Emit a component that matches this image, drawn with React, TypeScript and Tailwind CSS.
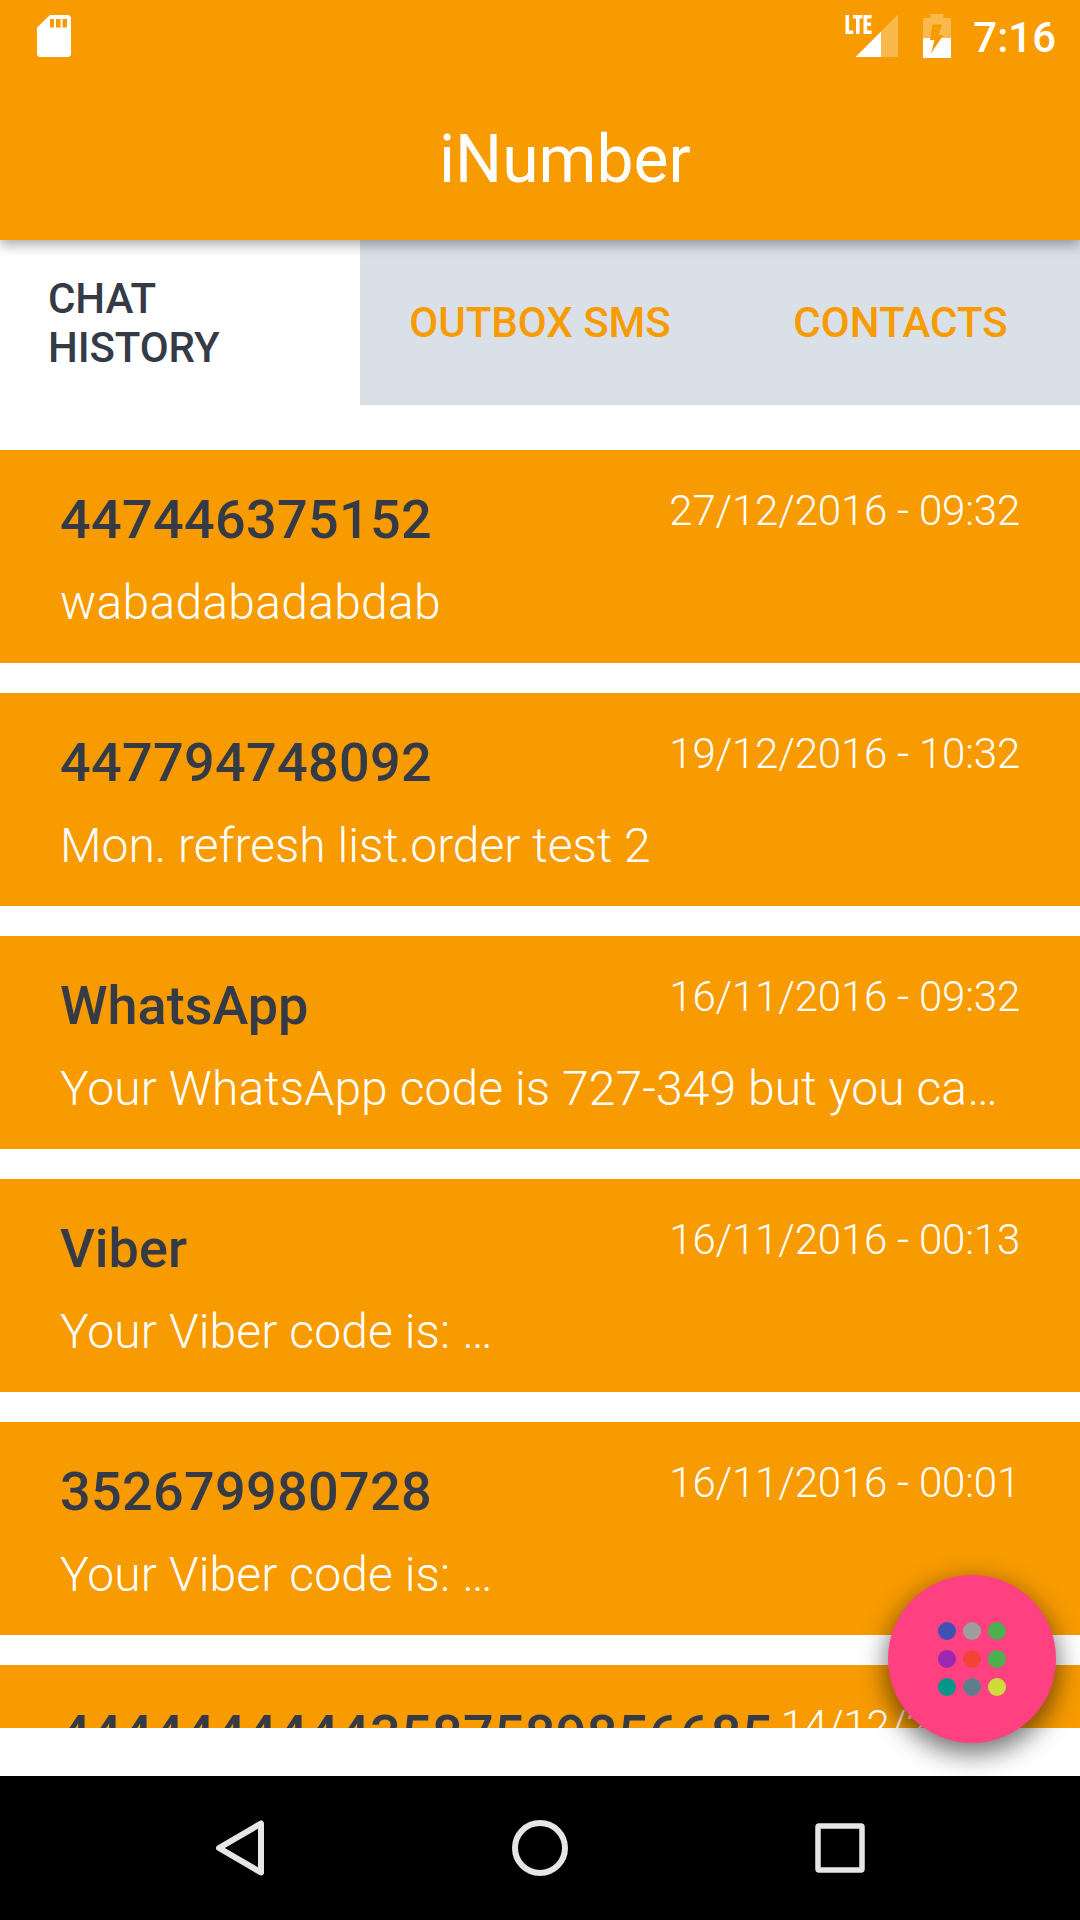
import React from "react";

type Chat = { name: string; date: string; text: string; nameTracking: string; textTracking: string };

const chats: Chat[] = [
  {
    name: "447446375152",
    date: "27/12/2016 - 09:32",
    text: "wabadabadabdab",
    nameTracking: "tracking-[0.3px]",
    textTracking: "tracking-[0.27px]",
  },
  {
    name: "447794748092",
    date: "19/12/2016 - 10:32",
    text: "Mon. refresh list.order test 2",
    nameTracking: "tracking-[0.3px]",
    textTracking: "tracking-normal",
  },
  {
    name: "WhatsApp",
    date: "16/11/2016 - 09:32",
    text: "Your WhatsApp code is 727-349 but you ca…",
    nameTracking: "tracking-normal",
    textTracking: "tracking-[0.1px]",
  },
  {
    name: "Viber",
    date: "16/11/2016 - 00:13",
    text: "Your Viber code is: …",
    nameTracking: "tracking-normal",
    textTracking: "tracking-[0.11px]",
  },
  {
    name: "352679980728",
    date: "16/11/2016 - 00:01",
    text: "Your Viber code is: …",
    nameTracking: "tracking-[0.3px]",
    textTracking: "tracking-[0.11px]",
  },
  {
    name: "44444444443587589856685",
    date: "14/12/2016 - 10:00",
    text: "",
    nameTracking: "tracking-[0.3px]",
    textTracking: "tracking-normal",
  },
];

function StatusBar() {
  return (
    <div className="flex h-[72px] items-start justify-between pl-[37px] pr-[24px]">
      <svg className="mt-[15px] h-[42px] w-[34px]" viewBox="0 0 34 42">
        <path
          fill="#fff"
          fillRule="evenodd"
          d="M13 0H30.500Q34 0 34 3.500V38.500Q34 42 30.500 42H3.500Q0 42 0 38.500V12.500ZM13 4V12.500H17V4ZM19 4V12.500H23.500V4ZM25.500 4V12.500H30V4Z"
        />
      </svg>
      <div className="flex items-start">
        <svg className="mt-[14px] h-[44px] w-[54px]" viewBox="0 0 54 44">
          <path fill="#fff" fillOpacity="0.3" d="M53 0.500V43H36V17.500Z" />
          <path fill="#fff" d="M36 17.500V43H10.500Z" />
          <g fill="none" stroke="#fff" strokeWidth="3.600">
            <path d="M2.300 1V18.200H8.300" />
            <path d="M8 2.800H17.500M12.800 2.800V20" />
            <path d="M26.600 2.800H20.300V18.200H26.600M20.300 10.300H26" />
          </g>
        </svg>
        <svg className="ml-[24px] mt-[14px] h-[44px] w-[28px]" viewBox="0 0 28 44">
          <path
            fill="#fff"
            fillOpacity="0.3"
            d="M7.500 0H20.500V4H28V24H18.400L20.500 21H15.500L19 10.500H9.500L7.300 24H0V4H7.500Z"
          />
          <path fill="#fff" d="M0 24H7.300L7 26H11.500L8 39.500L18.400 24H28V44H0Z" />
        </svg>
        <span className="ml-[22px] mt-[13px] text-[42px] font-medium leading-[50px] text-white">7:16</span>
      </div>
    </div>
  );
}

function ChatCard({ chat }: { chat: Chat }) {
  return (
    <article className="h-[213px] shrink-0 bg-[#f89b00] px-[60px] pt-[36px]">
      <div className="flex h-[66px] items-start justify-between gap-[8px]">
        <h2
          className={`mt-[2px] whitespace-nowrap text-[54px] font-medium leading-[64px] text-[#343b47] ${chat.nameTracking}`}
        >
          {chat.name}
        </h2>
        <time className="text-[42px] font-light leading-[50px] tracking-[-0.2px] text-white">{chat.date}</time>
      </div>
      <p className={`mt-[23px] whitespace-nowrap text-[48px] font-light leading-[56px] text-white ${chat.textTracking}`}>
        {chat.text}
      </p>
    </article>
  );
}

const dots = [
  "bg-[#3f51b5]", "bg-[#9e9e9e]", "bg-[#4caf50]",
  "bg-[#9c27b0]", "bg-[#f44336]", "bg-[#4caf50]",
  "bg-[#009688]", "bg-[#607d8b]", "bg-[#cddc39]",
];

export default function App() {
  return (
    <div className="relative flex h-[1920px] w-[1080px] flex-col overflow-hidden bg-white font-['Roboto',sans-serif]">
      <header className="relative z-10 h-[240px] shrink-0 bg-[#f89b00] shadow-[0_5px_12px_rgba(0,0,0,0.33)]">
        <StatusBar />
        <h1 className="pl-[439px] pt-[49px] text-[66px] font-normal leading-[78px] text-white">iNumber</h1>
      </header>

      <nav className="grid h-[165px] shrink-0 grid-cols-3 text-[42px] font-medium leading-[49px]">
        <div className="flex items-center px-[48px] tracking-[-0.1px] text-[#343b47]">CHAT HISTORY</div>
        <div className="flex items-center justify-center bg-[#dae0e8] text-[#f89b00]">OUTBOX SMS</div>
        <div className="flex items-center justify-center bg-[#dae0e8] pl-px text-[#f89b00]">CONTACTS</div>
      </nav>

      <main className="mt-[45px] flex h-[1278px] shrink-0 flex-col gap-[30px] overflow-hidden">
        {chats.map((c) => (
          <ChatCard key={c.name} chat={c} />
        ))}
      </main>

      <button className="absolute left-[888px] top-[1575px] grid h-[168px] w-[168px] grid-cols-[repeat(3,18px)] grid-rows-[repeat(3,18px)] content-center justify-center gap-x-[7px] gap-y-[10px] rounded-full bg-[#ff4081] shadow-[0_9px_26px_2px_rgba(0,0,0,0.55)]">
        {dots.map((d, i) => (
          <span key={i} className={`rounded-full ${d}`} />
        ))}
      </button>

      <footer className="relative mt-[48px] grid h-[144px] shrink-0 grid-cols-[1fr_120px_180px_120px_180px_120px_1fr] items-center bg-black">
        <svg className="col-start-2 h-[60px] w-full" viewBox="180 1818 120 60">
          <path d="M261 1823.500V1872.500L219 1848Z" fill="none" stroke="#e6e6e6" strokeWidth="6" strokeLinejoin="round" />
        </svg>
        <svg className="col-start-4 h-[60px] w-full" viewBox="480 1818 120 60">
          <circle cx="540" cy="1848" r="25" fill="none" stroke="#e6e6e6" strokeWidth="6" />
        </svg>
        <svg className="col-start-6 h-[60px] w-full" viewBox="780 1818 120 60">
          <rect x="818" y="1826" width="44" height="44" rx="1" fill="none" stroke="#e6e6e6" strokeWidth="5.500" />
        </svg>
      </footer>
    </div>
  );
}
